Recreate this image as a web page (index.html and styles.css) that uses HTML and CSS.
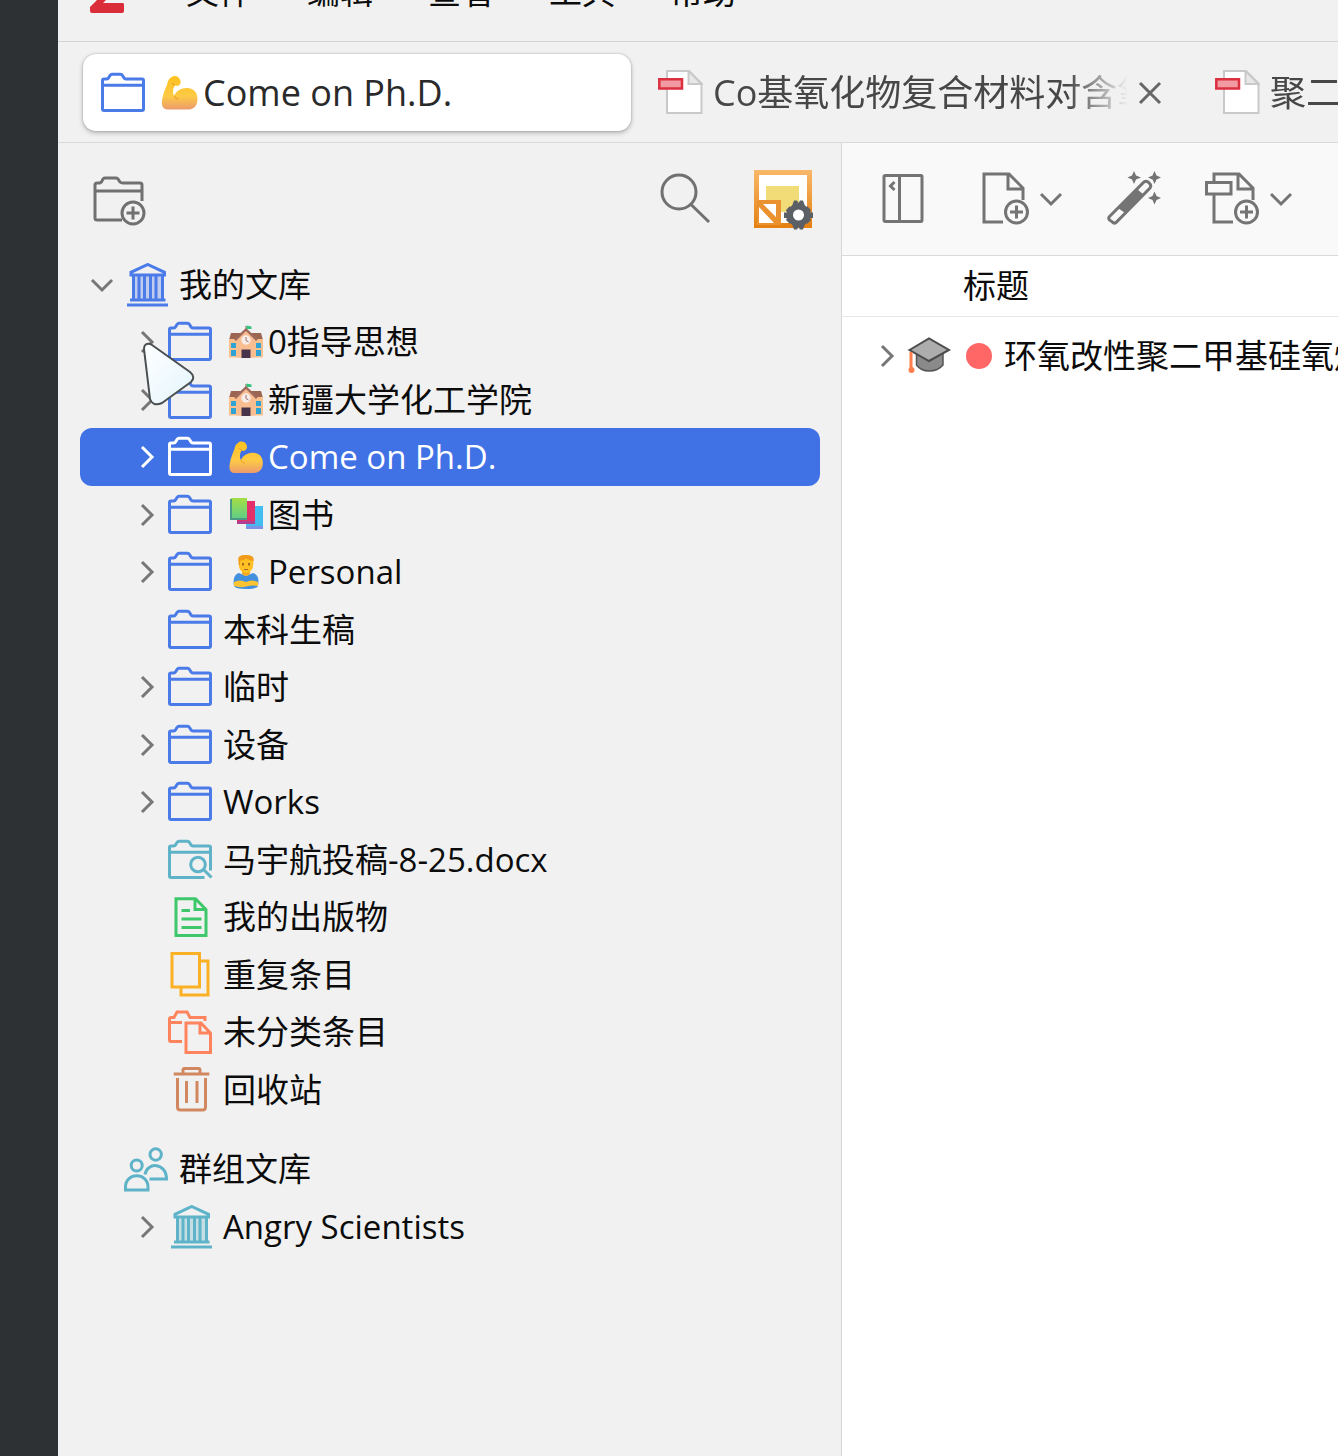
FILE: index.html
```html
<!DOCTYPE html>
<html lang="zh-CN">
<head>
<meta charset="utf-8">
<meta name="viewport" content="width=device-width, initial-scale=1">
<title>Come on Ph.D. - Zotero</title>
<link rel="stylesheet" href="styles.css">
</head>
<body>
<svg class="defs" aria-hidden="true">
  <defs>
    <linearGradient id="skin" x1="0" y1="0" x2="0" y2="1"><stop offset="0" stop-color="#ffc21f"/><stop offset=".6" stop-color="#fdca45"/><stop offset="1" stop-color="#ec9a6c"/></linearGradient>
    <linearGradient id="green" x1="0" y1="0" x2="0" y2="1"><stop offset="0" stop-color="#a5de45"/><stop offset="1" stop-color="#62cf85"/></linearGradient>
    <linearGradient id="amber" x1="0" y1="0" x2="0" y2="1"><stop offset="0" stop-color="#f8b869"/><stop offset="1" stop-color="#e5800f"/></linearGradient>
    <linearGradient id="ice" x1="0" y1="0" x2="1" y2="1"><stop offset="0" stop-color="#fff"/><stop offset="1" stop-color="#e3f5fd"/></linearGradient>
  </defs>
  <symbol id="folder" viewBox="0 0 44 44"><path d="M1.5 38V9.5Q1.5 8 3 8H5.500Q7 8 7.800 6.500L9 4.500Q9.800 3.300 11 3.300H19.500Q20.800 3.300 21.500 4.500L22.700 6.500Q23.500 8 25 8H41Q42.500 8 42.500 9.500V38Q42.500 39.500 41 39.500H3Q1.500 39.500 1.500 38ZM1.500 14.200H42.500"/></symbol>
  <symbol id="library" viewBox="0 0 44 44"><path class="tint" d="M9 13H39V36H9Z"/><path d="M7 12V9.300L23.700 1.500L40.500 9.300V12ZM9.500 12V36M15 12V36M20.500 12V36M26.500 12V36M32 12V36M38.500 12V36M6 37H41.500M3 42H44"/></symbol>
  <symbol id="right" viewBox="0 0 24 24"><path d="M8 2L18 12L8 22"/></symbol>
  <symbol id="down" viewBox="0 0 24 24"><path d="M2 7L12 17L22 7"/></symbol>
  <symbol id="arm" viewBox="-6 -6 45 44"><path fill="url(#skin)" d="M9 2C11 0 15 0 17 3C19 6 18 9 15 10L12.500 9.500C10.500 13 10.500 17 12 19C14 14 20 11 26 12C33 13 35 20 33.300 26C32 30 29 32 24 32H6C2 32 0 29 .5 25C1 18 4 12 5.500 8C6 5 7 3 9 2Z"/><path class="crease" d="M12 19C12.500 21 14 22 16 22M12.500 9.500L10 7"/></symbol>
  <symbol id="school" viewBox="-6 -5 45 44"><path fill="#9b6552" d="M2 8H32L34 15H0Z"/><path fill="#fbc08c" d="M0 14H34V32.500H0Z"/><path fill="#9f6a5c" d="M17 3L29 14L27 16L17 7L7 16L5 14Z"/><path fill="#f9bd92" d="M17 6L26 15V32.500H8V15Z"/><path fill="#2fa4d4" d="M2 18H7V23H2ZM2 25H7V31H2ZM27 18H32V23H27ZM27 25H32V31H27Z"/><circle cx="17" cy="15" r="4.700" fill="#f6ede9"/><path fill="none" stroke="#a16f72" d="M17 12V15.500L19.500 17"/><path fill="#47334a" d="M12.500 24.500H21.500V33H12.500Z"/><path fill="#8c5b4b" d="M16.500 1H17.500V6H16.500Z"/><path fill="#30c47c" d="M17.500 .5L22.500 1.500V4L17.500 4Z"/></symbol>
  <symbol id="books" viewBox="-6 -5 45 44"><path fill="#43bdf0" d="M17 8H34V31H17Z"/><path fill="#7b93e6" d="M17 28H34V31H17Z"/><path fill="#e2306b" d="M8 3H26V25H8Z"/><path fill="#b03f91" d="M8 23H26V26H8Z"/><path fill="url(#green)" d="M2 0H18V20H2Z"/><path fill="#4c9a86" d="M1 1H3V20H18V22H1Z"/></symbol>
  <symbol id="person" viewBox="-6 -5 45 44"><path fill="#4391dc" d="M5 31Q3 20 10 18L17 21L24 18Q31 20 29 31Q28 34 17 34Q6 34 5 31Z"/><path fill="#f5a823" d="M13 14H21V19Q17 23 13 19Z"/><path fill="#fec022" d="M9.500 4Q10 0 17 0Q24 0 24.500 5L24 12Q22 18 17 18Q12 18 10 12Z"/><path fill="#f09b1b" d="M9.500 5Q8 0 17 0Q26 0 24.500 6Q20 5 17 3.500Q14 6 11 5.500V10H9.800Z"/><path fill="#a46b24" d="M13 8H15V10.500H13ZM19 8H21V10.500H19ZM15 14H19V15H15Z"/><path fill="#fdc431" d="M5 27Q11 24 17 27Q23 24 29 27V31Q23 30 17 31.500Q11 33 5 31Z"/></symbol>
  <symbol id="pdf" viewBox="0 0 45 45"><path fill="#fff" stroke="#c9c9c9" stroke-width="2" d="M9 1H31L43.500 13.500V43H9Z"/><path fill="#e8e8e8" stroke="#c9c9c9" stroke-width="2" d="M30.500 1V14H43.500Z"/><path fill="#f19aa2" stroke="#dc2f3f" stroke-width="2.500" d="M1.300 9.300H24V18.500H1.300Z"/></symbol>
</svg>

<div class="rail"></div>
<div class="app">
  <nav class="menubar" aria-label="菜单">
    <svg class="logo" width="36" height="36" viewBox="0 0 36 36" aria-hidden="true"><path fill="#db2c3a" d="M2 0H34V6L14 26H34Q35 26 35 28V34Q35 36 33 36H3Q1 36 1 34V30L23 8H2Z"/></svg>
    <button type="button">文件</button>
    <button type="button">编辑</button>
    <button type="button">查看</button>
    <button type="button">工具</button>
    <button type="button">帮助</button>
  </nav>

  <div class="tabs" role="tablist">
    <button class="tab active" type="button" role="tab" aria-selected="true">
      <svg class="icon blue"><use href="#folder"/></svg><svg class="emoji"><use href="#arm"/></svg><span class="tab-title">Come on Ph.D.</span>
    </button>
    <div class="tab" role="tab">
      <svg class="pdf"><use href="#pdf"/></svg><span class="tab-title faded">Co基氧化物复合材料对含氧挥发物</span>
      <button class="close" type="button" aria-label="关闭"><svg class="stroke" width="24" height="24" viewBox="0 0 24 24"><path d="M2 2L22 22M22 2L2 22"/></svg></button>
    </div>
    <div class="tab" role="tab">
      <svg class="pdf"><use href="#pdf"/></svg><span class="tab-title faded">聚二甲基硅氧烷</span>
    </div>
  </div>

  <div class="panes">
    <aside class="sidebar">
      <div class="side-tools">
        <button type="button" aria-label="新建分类"><svg class="stroke" width="54" height="54" viewBox="0 0 54 54"><path d="M29 47H4Q2 47 2 45V12Q2 10 4 10H7Q9 9 10 6Q11 5 12 5H23Q24 5 25 6L27 9Q28 10 30 10H47Q49 10 49 12V28M2 18H49"/><circle cx="40" cy="40" r="11"/><path d="M33.500 40H46.500M40 33.500V46.500"/></svg></button>
        <span class="grow"></span>
        <button type="button" aria-label="搜索"><svg class="stroke" width="52" height="54" viewBox="0 0 52 54"><circle cx="19" cy="19" r="17"/><path d="M30.500 31L49 49"/></svg></button>
        <button type="button" aria-label="样式设置"><svg width="60" height="60" viewBox="0 0 60 60"><path fill="url(#amber)" d="M0 0H58V58H0Z"/><path fill="#fff" d="M5 5H53V53H5Z"/><path fill="#f2dc78" d="M12 16H45V42H12Z"/><path fill="#ea922f" d="M3 30H27V55H3Z"/><path fill="#fff" d="M9 34H22V47ZM5 37L20 53H5Z"/><g fill="#5b6066"><circle cx="44.500" cy="45" r="11.500"/><path d="M40 30.500H43L44.500 33L46 30.500H49L51 36H38ZM38 54H51L49 59.500H46L44.500 57L43 59.500H40ZM53 36L57 40L56 42.500H59V48H56L57 50L53 54ZM36 36L32 40L33 42.500H30V48H33L32 50L36 54Z"/></g><circle cx="44.500" cy="45" r="5.500" fill="#fff"/></svg></button>
      </div>

      <ul class="tree">
        <li class="row"><button class="twisty" type="button" aria-label="折叠"><svg class="chev"><use href="#down"/></svg></button><svg class="icon blue"><use href="#library"/></svg><span>我的文库</span></li>
        <li class="row child"><button class="twisty" type="button" aria-label="展开"><svg class="chev"><use href="#right"/></svg></button><svg class="icon blue"><use href="#folder"/></svg><span class="label"><svg class="emoji"><use href="#school"/></svg>0指导思想</span></li>
        <li class="row child"><button class="twisty" type="button" aria-label="展开"><svg class="chev"><use href="#right"/></svg></button><svg class="icon blue"><use href="#folder"/></svg><span class="label"><svg class="emoji"><use href="#school"/></svg>新疆大学化工学院</span></li>
        <li class="row child selected"><button class="twisty" type="button" aria-label="展开"><svg class="chev"><use href="#right"/></svg></button><svg class="icon"><use href="#folder"/></svg><span class="label"><svg class="emoji"><use href="#arm"/></svg>Come on Ph.D.</span></li>
        <li class="row child"><button class="twisty" type="button" aria-label="展开"><svg class="chev"><use href="#right"/></svg></button><svg class="icon blue"><use href="#folder"/></svg><span class="label"><svg class="emoji"><use href="#books"/></svg>图书</span></li>
        <li class="row child"><button class="twisty" type="button" aria-label="展开"><svg class="chev"><use href="#right"/></svg></button><svg class="icon blue"><use href="#folder"/></svg><span class="label"><svg class="emoji"><use href="#person"/></svg>Personal</span></li>
        <li class="row child"><span class="twisty"></span><svg class="icon blue"><use href="#folder"/></svg><span>本科生稿</span></li>
        <li class="row child"><button class="twisty" type="button" aria-label="展开"><svg class="chev"><use href="#right"/></svg></button><svg class="icon blue"><use href="#folder"/></svg><span>临时</span></li>
        <li class="row child"><button class="twisty" type="button" aria-label="展开"><svg class="chev"><use href="#right"/></svg></button><svg class="icon blue"><use href="#folder"/></svg><span>设备</span></li>
        <li class="row child"><button class="twisty" type="button" aria-label="展开"><svg class="chev"><use href="#right"/></svg></button><svg class="icon blue"><use href="#folder"/></svg><span>Works</span></li>
        <li class="row child"><span class="twisty"></span><svg class="icon teal" viewBox="0 0 44 44"><path d="M36.500 39.500H3Q1.500 39.500 1.500 38V9.500Q1.500 8 3 8H5.500Q7 8 7.800 6.500L9 4.500Q9.800 3.300 11 3.300H19.500Q20.800 3.300 21.500 4.500L22.700 6.500Q23.500 8 25 8H41Q42.500 8 42.500 9.500V32.500M1.500 14.200H42.500M35.500 31.500L43.500 39.500"/><circle cx="30" cy="26.500" r="7.300"/></svg><span>马宇航投稿-8-25.docx</span></li>
        <li class="row child"><span class="twisty"></span><svg class="icon green" viewBox="0 0 44 44"><path d="M8 3.700H27.500L38 14.500V40.500H8ZM27 4V14.500H38M13.500 15.500H22M13.500 24H33.500M13.500 32.500H33.500"/></svg><span>我的出版物</span></li>
        <li class="row child"><span class="twisty"></span><svg class="icon yellow" viewBox="0 0 44 44"><path d="M4 .5H31.500V34H4ZM32 8H40V42H13V35"/></svg><span>重复条目</span></li>
        <li class="row child"><span class="twisty"></span><svg class="icon coral" viewBox="0 0 44 44"><path d="M14 31.500H3Q1.500 31.500 1.500 30V9Q1.500 7.500 3 7.500H6L9 2H19L22 7.500H37V11M1.500 12.500H14M18 13H33L42.500 23V42.500H18ZM32 13V23H42.500"/></svg><span>未分类条目</span></li>
        <li class="row child"><span class="twisty"></span><svg class="icon brown" viewBox="0 0 44 44"><path d="M5.700 6H41.300M15 6V2Q15 .5 16.500 .5H30.500Q32 .5 32 2V6M9.500 10V39Q9.500 42 12.500 42H34.500Q37.500 42 37.500 39V10M18.500 13V35M29 13V35"/></svg><span>回收站</span></li>
        <li class="row group"><span class="twisty"></span><svg class="icon teal" viewBox="0 0 44 44"><circle cx="12.700" cy="18.500" r="5.500"/><circle cx="31.700" cy="7.500" r="5.700"/><path d="M1.500 43V40C1.500 25 24 25 24 40V43ZM21 27.500C23 14.500 42.500 15.500 42.500 32H25.500"/></svg><span>群组文库</span></li>
        <li class="row child"><button class="twisty" type="button" aria-label="展开"><svg class="chev"><use href="#right"/></svg></button><svg class="icon teal"><use href="#library"/></svg><span>Angry Scientists</span></li>
      </ul>
    </aside>

    <main class="items">
      <div class="item-tools">
        <button type="button" aria-label="隐藏分类栏"><svg class="stroke" width="55" height="54" viewBox="0 0 55 54"><path d="M2.500 3.500H38Q39 3.500 39 4.500V48Q39 49.500 38 49.500H2.500Q1 49.500 1 48V4.500Q1 3.500 2.500 3.500ZM16.500 3.500V49.500M11.500 10L7.500 14L11.500 18"/></svg></button>
        <button class="split" type="button" aria-label="新建条目"><svg class="stroke" width="48" height="54" viewBox="0 0 48 54"><path d="M21 50H2V2H27L41 16V28M26 2V17H41"/><circle cx="34.500" cy="40" r="11"/><path d="M28 40H41M34.500 33.500V46.500"/></svg><svg class="stroke" width="22" height="22" viewBox="1 1 22 22"><use href="#down" width="24" height="24"/></svg></button>
        <button type="button" aria-label="通过标识符添加"><svg class="stroke" width="55" height="54" viewBox="0 0 55 54"><path d="M3.500 44.500L38 10Q40 8.500 42 10L44 12Q45.500 14 44 16L10 50.500Q8 52 6.500 50L3.500 48Q2 46 3.500 44.500Z"/><path class="solid" d="M12 36L31 17L38 23L19 41Z"/><path class="solid" d="M28 -1L30 3.500L35 5.500L30 7.500L28 12L26 7.500L21.500 5.500L26 3.500ZM48.500 -1L50.500 3.500L55 5.500L50.500 7.500L48.500 12L46.500 7.500L42 5.500L46.500 3.500ZM48.500 19.500L50.500 24L55 26L50.500 28L48.500 32.500L46.500 28L42 26L46.500 24Z"/></svg></button>
        <button class="split" type="button" aria-label="添加附件"><svg class="stroke" width="55" height="54" viewBox="0 0 55 54"><path d="M28 50H9V23M9 10V2H34L48 16V28M33 2V17H48M1.500 10.500H26V22H1.500Z"/><circle cx="41.500" cy="40" r="11"/><path d="M35 40H48M41.500 33.500V46.500"/></svg><svg class="stroke" width="22" height="22" viewBox="1 1 22 22"><use href="#down" width="24" height="24"/></svg></button>
      </div>
      <table class="list">
        <thead><tr><th scope="col">标题</th></tr></thead>
        <tbody><tr><td><div class="item">
          <button class="twisty" type="button" aria-label="展开"><svg class="chev"><use href="#right"/></svg></button>
          <svg class="hat" viewBox="0 0 44 44"><path fill="#8a8a8a" stroke="#555" stroke-width="1.500" d="M8.500 20V31Q13 37 21 37Q30 37 35 31V20Z"/><path fill="#adadad" stroke="#4c4c4c" stroke-width="2" d="M1.500 16L21 4.500L41 16L21 27Z"/><path fill="none" stroke="#ff7f4e" stroke-width="3" d="M3 18V34"/><circle cx="3.500" cy="36" r="3" fill="#ff7f4e"/></svg>
          <span class="dot"></span>
          <span class="title">环氧改性聚二甲基硅氧烷</span>
        </div></td></tr></tbody>
      </table>
    </main>
  </div>
</div>
<svg class="pointer" width="56" height="68" viewBox="0 0 56 68" aria-hidden="true"><path fill="url(#ice)" stroke="#4a4f52" stroke-width="2" stroke-linejoin="round" d="M3 9Q3 3 9 4Q10 4.300 11 5L49 32Q55 37 50 42L21 63Q12 67 9 59Z"/></svg>
</body>
</html>
```
FILE: styles.css
```css
* {
  box-sizing: border-box;
}

body {
  margin: 0;
  display: flex;
  height: 100vh;
  overflow: hidden;
  background: #f1f1f1;
  color: #0c0c0c;
  font: 33px/48px "Open Sans", "Noto Sans CJK SC", sans-serif;
}

button {
  margin: 0;
  padding: 0;
  border: 0;
  background: none;
  color: inherit;
  font: inherit;
}

svg {
  display: block;
  flex: none;
}

.defs {
  position: absolute;
  width: 0;
  height: 0;
}

.rail {
  flex: none;
  width: 58px;
  background: #2d3134;
}

.app {
  flex: 1;
  min-width: 0;
  display: flex;
  flex-direction: column;
}

/* Menu bar */
.menubar {
  flex: none;
  display: flex;
  align-items: flex-end;
  gap: 55px;
  height: 42px;
  padding: 0 31px 25px;
  border-bottom: 1px solid #d2d2d2;
}

.logo {
  margin-bottom: 3px;
  margin-right: 6px;
}

/* Tabs */
.tabs {
  flex: none;
  display: flex;
  gap: 9px;
  height: 101px;
  padding: 12px 0 11px 25px;
  border-bottom: 1px solid #d9d9d9;
  overflow: hidden;
}

.tab {
  flex: none;
  display: flex;
  align-items: center;
  gap: 10px;
  width: 548px;
  padding: 0 26px 0 18px;
  border-radius: 13px;
  color: #474747;
  font-size: 36px;
  white-space: nowrap;
}

.tab.active {
  background: #fff;
  color: #2a2a2a;
  box-shadow: 0 0 2px rgba(0, 0, 0, .25), 0 2px 5px rgba(0, 0, 0, .25);
}

.tab .emoji {
  width: 48px;
  height: 47px;
  margin-right: -10px;
}

.tab-title {
  flex: 1;
  min-width: 0;
  overflow: hidden;
  text-align: left;
}

.faded {
  -webkit-mask-image: linear-gradient(to left, transparent, #000 60px);
  mask-image: linear-gradient(to left, transparent, #000 60px);
}

.close {
  color: #666;
}

/* Icons */
.icon,
.hat {
  width: 44px;
  height: 44px;
  overflow: visible;
}

.icon {
  fill: none;
  stroke: currentColor;
  stroke-width: 3px;
}

.tint {
  fill: currentColor;
  fill-opacity: .3;
  stroke: none;
}

.emoji {
  width: 45px;
  height: 44px;
}

.crease {
  fill: none;
  stroke: #ee9c27;
  stroke-width: 1px;
}

.pdf {
  width: 45px;
  height: 45px;
}

.stroke {
  overflow: visible;
  fill: none;
  stroke: currentColor;
  stroke-width: 3px;
}

.stroke .solid {
  fill: currentColor;
  stroke: none;
}

.blue { color: #4a7be8; }
.teal { color: #5fb3c8; }
.green { color: #3ec76b; }
.yellow { color: #fbb125; }
.coral { color: #ff845d; }
.brown { color: #d1875f; }

.twisty {
  flex: none;
  display: flex;
  align-items: center;
  justify-content: center;
  width: 36px;
  height: 36px;
  color: #777;
}

.chev {
  width: 24px;
  height: 24px;
  fill: none;
  stroke: currentColor;
  stroke-width: 3px;
}

/* Collections pane */
.panes {
  flex: 1;
  min-height: 0;
  display: flex;
}

.sidebar {
  flex: none;
  width: 784px;
  border-right: 1px solid #d6d6d6;
}

.side-tools {
  display: flex;
  align-items: center;
  gap: 42px;
  height: 113px;
  padding: 0 27px 0 35px;
  color: #707070;
}

.grow {
  flex: 1;
}

.tree {
  margin: 0;
  padding: 0 21px 0 22px;
  list-style: none;
}

.row {
  display: flex;
  align-items: center;
  height: 58px;
  padding-left: 4px;
  border-radius: 12px;
  white-space: nowrap;
}

.row:nth-child(odd) {
  height: 57px;
}

.row .icon {
  margin: 0 11px 0 4px;
}

.child {
  padding-left: 48px;
}

.group {
  margin-top: 22px;
}

.label {
  display: flex;
  align-items: center;
}

.selected,
.selected .twisty {
  background: #4072e5;
  color: #fff;
}

/* Items pane */
.items {
  flex: 1;
  min-width: 0;
  overflow: hidden;
  background: #fff;
}

.item-tools {
  display: flex;
  align-items: center;
  gap: 44px;
  height: 113px;
  padding-left: 41px;
  background: #f9f9f9;
  border-bottom: 1px solid #dadada;
  color: #747474;
}

.split {
  display: flex;
  align-items: center;
  gap: 10px;
}

.list {
  width: 100%;
  border-collapse: collapse;
  table-layout: fixed;
}

.list th {
  height: 60px;
  padding: 0 0 0 121px;
  border-bottom: 1px solid #e6e6e6;
  font-weight: 400;
  text-align: left;
}

.list td {
  height: 79px;
  padding: 0 0 0 26px;
}

.item {
  display: flex;
  align-items: center;
  overflow: hidden;
  white-space: nowrap;
}

.item .hat {
  margin: 0 14px 0 4px;
}

.dot {
  flex: none;
  width: 26px;
  height: 26px;
  margin-right: 12px;
  border-radius: 50%;
  background: #ff6666;
}

/* Mouse pointer over the tree */
.pointer {
  position: absolute;
  left: 141px;
  top: 340px;
}
```
